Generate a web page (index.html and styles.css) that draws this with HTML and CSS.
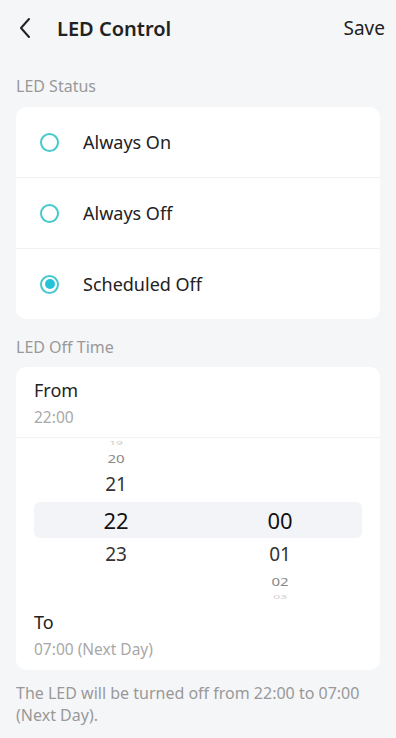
FILE: index.html
```html
<!DOCTYPE html>
<html lang="en">
<head>
    <meta charset="UTF-8">
    <meta name="viewport" content="width=device-width, initial-scale=1.0">
    <title>LED Control</title>
    <link rel="stylesheet" href="styles.css">
</head>
<body>
    <div class="header">
        <div class="back">
            <svg width="14" height="22" viewBox="0 0 14 22"><path d="M11 2 L3 11 L11 20" fill="none" stroke="#222" stroke-width="2" stroke-linecap="round" stroke-linejoin="round"/></svg>
        </div>
        <div class="title">LED Control</div>
        <div class="save">Save</div>
    </div>

    <div class="section-label">LED Status</div>
    <div class="card">
        <div class="option">
            <span class="radio"></span>
            <span class="option-text">Always On</span>
        </div>
        <div class="option">
            <span class="radio"></span>
            <span class="option-text">Always Off</span>
        </div>
        <div class="option">
            <span class="radio checked"></span>
            <span class="option-text">Scheduled Off</span>
        </div>
    </div>

    <div class="section-label second">LED Off Time</div>
    <div class="card time-card">
        <div class="time-block from">
            <div class="time-title">From</div>
            <div class="time-value">22:00</div>
        </div>
        <div class="picker">
            <div class="prow r-tiny"><span class="faint">19</span><span></span></div>
            <div class="prow r-small"><span class="dim">20</span><span></span></div>
            <div class="prow r-mid"><span>21</span><span></span></div>
            <div class="prow r-sel"><span>22</span><span>00</span></div>
            <div class="prow r-mid2"><span>23</span><span>01</span></div>
            <div class="prow r-small2"><span></span><span class="dim">02</span></div>
            <div class="prow r-tiny2"><span></span><span class="faint">03</span></div>
        </div>
        <div class="time-block to">
            <div class="time-title">To</div>
            <div class="time-value">07:00 (Next Day)</div>
        </div>
    </div>

    <p class="note">The LED will be turned off from 22:00 to 07:00 (Next Day).</p>
</body>
</html>
```

FILE: styles.css
```css
body {
    margin: 0;
    background-color: #f5f6f8;
    font-family: "Noto Sans", Arial, sans-serif;
    color: #222;
}
.header {
    display: flex;
    align-items: center;
    height: 56px;
    padding: 0 11px 0 18px;
}
.back {
    display: flex;
    width: 39px;
}
.title {
    flex: 1;
    font-size: 20px;
    font-weight: 600;
}
.save {
    font-size: 19px;
}
.section-label {
    margin: 19px 16px 10px;
    font-size: 16px;
    color: #999;
    line-height: 22px;
}
.section-label.second {
    margin-top: 17px;
    margin-bottom: 9px;
}
.card {
    margin: 0 16px;
    background-color: #fff;
    border-radius: 10px;
}
.option {
    display: flex;
    align-items: center;
    height: 70px;
    padding-left: 24px;
    border-bottom: 1px solid #f2f2f2;
}
.option:last-child {
    border-bottom: none;
}
.radio {
    box-sizing: border-box;
    width: 19px;
    height: 19px;
    border: 2.5px solid #46c8cc;
    border-radius: 50%;
    margin-right: 24px;
    display: flex;
    justify-content: center;
    align-items: center;
}
.radio.checked::after {
    content: "";
    width: 10px;
    height: 10px;
    border-radius: 50%;
    background-color: #26c3d8;
}
.option-text {
    font-size: 18px;
}
.time-block {
    padding: 12px 18px 10px;
}
.from {
    border-bottom: 1px solid #f2f2f2;
}
.to {
    padding-top: 9px;
    padding-bottom: 11px;
}
.time-title {
    font-size: 18px;
    line-height: 22px;
}
.time-value {
    margin-top: 6px;
    font-size: 15.5px;
    line-height: 20px;
    color: #a8a8a8;
}
.picker {
    margin: 0 18px;
}
.prow {
    display: grid;
    grid-template-columns: 1fr 1fr;
    align-items: center;
    text-align: center;
    font-size: 19px;
    color: #333;
}
.prow span {
    display: block;
}
.r-tiny, .r-tiny2 {
    height: 10px;
    line-height: 10px;
}
.r-small {
    height: 18px;
}
.r-small2 {
    height: 22px;
}
.r-mid {
    height: 36px;
}
.r-mid2 {
    height: 32px;
}
.r-sel {
    height: 36px;
    background-color: #f3f4f8;
    border-radius: 6px;
    font-size: 22px;
    color: #111;
}
.dim {
    font-size: 15px;
    color: #888;
    transform: scaleY(0.75);
}
.faint {
    font-size: 12px;
    color: #ccc;
    transform: scaleY(0.4);
}
.note {
    margin: 12px 16px;
    font-size: 16px;
    line-height: 22px;
    color: #999;
}
```
